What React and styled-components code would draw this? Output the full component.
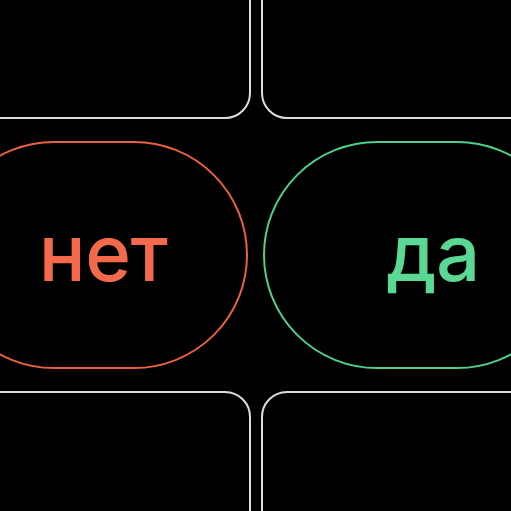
import React from 'react';
import styled, { createGlobalStyle } from 'styled-components';

const GlobalStyle = createGlobalStyle`
  html, body {
    margin: 0;
    padding: 0;
    background: #000;
    overflow: hidden;
  }
`;

const Screen = styled.div`
  width: 511px;
  height: 511px;
  overflow: hidden;
  background: #000;
  display: grid;
  grid-template-columns: 1fr 1fr;
  grid-template-rows: 119px 228px 1fr;
  column-gap: 10px;
  row-gap: 22px;
  font-family: Inter, "Noto Sans", sans-serif;
`;

const Tile = styled.div`
  border: 2.5px solid #dcdcdc;
  border-radius: 26px;
  margin: ${({ $pos }) =>
    $pos === 'tl' ? '-60px 0 0 -60px'
    : $pos === 'tr' ? '-60px -60px 0 0'
    : $pos === 'bl' ? '0 0 -60px -60px'
    : '0 -60px -60px 0'};
`;

const Pill = styled.button`
  all: unset;
  box-sizing: border-box;
  display: flex;
  align-items: center;
  justify-content: ${({ $side }) => ($side === 'left' ? 'flex-end' : 'flex-start')};
  height: 228px;
  border: 2px solid ${({ $color }) => $color};
  border-radius: 114px;
  color: ${({ $text }) => $text};
  font-size: 78px;
  font-weight: 500;
  letter-spacing: -0.5px;
  margin: ${({ $side }) => ($side === 'left' ? '0 3px 0 -60px' : '0 -60px 0 2px')};
  padding: ${({ $side }) => ($side === 'left' ? '0 78px 6px 0' : '0 0 6px 122px')};
  cursor: pointer;
`;

export default function App() {
  return (
    <>
      <GlobalStyle />
      <Screen>
        <Tile $pos="tl" />
        <Tile $pos="tr" />
        <Pill $side="left" $color="#e8603f" $text="#f26a4b">нет</Pill>
        <Pill $side="right" $color="#4fcf8a" $text="#5ad894">да</Pill>
        <Tile $pos="bl" />
        <Tile $pos="br" />
      </Screen>
    </>
  );
}
